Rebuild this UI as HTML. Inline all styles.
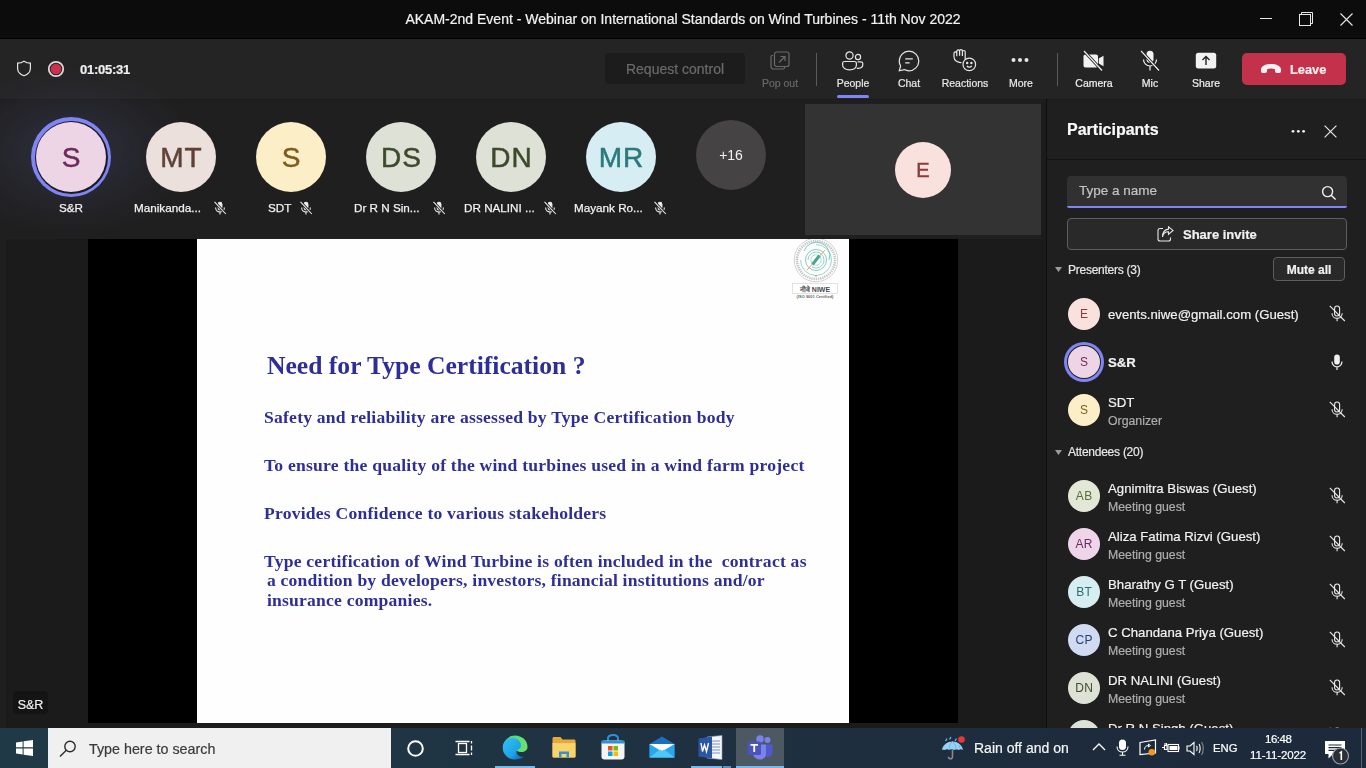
<!DOCTYPE html>
<html><head><meta charset="utf-8">
<style>
*{margin:0;padding:0;box-sizing:border-box}
html,body{width:1366px;height:768px;overflow:hidden;background:#1f1f1f;font-family:"Liberation Sans",sans-serif;color:#fff}
div,span,svg{position:absolute}
.t{white-space:nowrap;line-height:1;will-change:transform;-webkit-text-stroke:0.2px currentColor}
.slide .t{-webkit-text-stroke:0}
#title{left:0;top:0;width:1366px;height:38px;background:#0c0c0c}
#toolbar{left:0;top:38px;width:1366px;height:61px;background:#242424}
#strip{left:0;top:99px;width:1366px;height:4px;background:linear-gradient(#1b1b1b 0,#1b1b1b 1px,#202020 1px,#1d1d1d 3px,#1f1f1f 4px)}
#stage{left:0;top:103px;width:1046px;height:625px;background:#1f1f1f}
#vsep{left:1046px;top:99px;width:1px;height:629px;background:#0e0e0e}
#panel{left:1047px;top:103px;width:319px;height:625px;background:#1f1f1f;overflow:hidden}
#taskbar{left:0;top:728px;width:1366px;height:40px;background:linear-gradient(90deg,#1f3a46 0%,#1f3644 25%,#1f3040 55%,#1d2b3d 80%,#1c2a3c 100%)}
.lbl{font-size:10.5px;color:#d6d6d6;text-align:center;width:80px;top:39.8px}
.sep{width:1px;background:#5a5a5a}
.av{border-radius:50%;text-align:center;-webkit-text-stroke:0.5px currentColor;letter-spacing:1px;text-indent:1px}
</style></head>
<body>
<!-- TITLE BAR -->
<div id="title">
  <div class="t" style="left:0;width:1366px;top:11.7px;text-align:center;font-size:14px;color:#f2f2f2">AKAM-2nd Event - Webinar on International Standards on Wind Turbines - 11th Nov 2022</div>
  <svg style="left:1260px;top:18px" width="12" height="2"><rect width="12" height="1" fill="#e8e8e8"/></svg>
  <svg style="left:1299px;top:12px" width="14" height="14" viewBox="0 0 14 14" fill="none" stroke="#e8e8e8" stroke-width="1"><rect x="0.5" y="2.5" width="11" height="11"/><path d="M2.5 2.5V0.5H13.5V11.5H11.5"/></svg>
  <svg style="left:1340px;top:13px" width="13" height="13" viewBox="0 0 13 13" stroke="#e8e8e8" stroke-width="1.1"><path d="M0.5 0.5L12.5 12.5M12.5 0.5L0.5 12.5"/></svg>
</div>

<!-- TOOLBAR -->
<div id="toolbar">
  <svg style="left:16px;top:22px" width="16" height="17" viewBox="0 0 16 17" fill="none" stroke="#e6e6e6" stroke-width="1.2"><path d="M8 1.2C10 2.6 12.2 3.2 14.4 3.2V8.4C14.4 12 11.6 14.4 8 15.8C4.4 14.4 1.6 12 1.6 8.4V3.2C3.8 3.2 6 2.6 8 1.2Z"/></svg>
  <svg style="left:47px;top:22px" width="18" height="18" viewBox="0 0 18 18"><circle cx="9" cy="9" r="7.2" fill="none" stroke="#e0dcdc" stroke-width="1.8"/><circle cx="9" cy="9" r="5.3" fill="#d0304f"/></svg>
  <div class="t" style="left:80px;top:24.6px;font-size:13px;font-weight:bold;color:#f0f0f0;letter-spacing:-0.25px">01:05:31</div>

  <div style="left:605px;top:15px;width:140px;height:31px;background:#1c1c1c;border-radius:4px"></div>
  <div class="t" style="left:605px;width:140px;top:24.2px;text-align:center;font-size:14px;color:#6b6b6b">Request control</div>

  <svg style="left:770px;top:13px" width="21" height="19" viewBox="0 0 21 19" fill="none" stroke="#6a6a6a" stroke-width="1.2"><path d="M3 4.5H2.2C1.5 4.5 1 5 1 5.7V15.5C1 17 2 18 3.5 18H13.3C14 18 14.5 17.5 14.5 16.8V16"/><rect x="4.5" y="1" width="14.5" height="14.5" rx="2"/><path d="M9 11.5L15 5.5M10.5 5.5H15V10"/></svg>
  <div class="lbl t" style="left:739.5px;color:#696969">Pop out</div>
  <div class="sep" style="left:816px;top:15px;height:33px"></div>

  <svg style="left:842px;top:13px" width="22" height="20" viewBox="0 0 22 20" fill="none" stroke="#e6e6e6" stroke-width="1.2"><circle cx="7.5" cy="4.5" r="3.6"/><circle cx="16" cy="6" r="2.6"/><path d="M2.5 10.5H12.5C13.6 10.5 14.4 11.3 14.4 12.4V14C14.4 17 11.5 18.8 7.5 18.8C3.5 18.8 0.6 17 0.6 14V12.4C0.6 11.3 1.4 10.5 2.5 10.5Z"/><path d="M15.6 10.8H18.9C20 10.8 20.8 11.6 20.8 12.7V13.6C20.8 15.8 18.9 17.3 16.2 17.3C15.7 17.3 15.2 17.2 14.8 17.1"/></svg>
  <div class="lbl t" style="left:812.5px;color:#e8e8e8">People</div>
  <div style="left:837px;top:57px;width:32px;height:3px;background:#7f85f5;border-radius:2px"></div>

  <svg style="left:898px;top:12px" width="22" height="22" viewBox="0 0 22 22" fill="none" stroke="#e6e6e6" stroke-width="1.2"><path d="M11 1.2C16.4 1.2 20.8 5.6 20.8 11S16.4 20.8 11 20.8C9.3 20.8 7.7 20.4 6.3 19.6L1.3 20.8L2.6 16C1.7 14.5 1.2 12.8 1.2 11C1.2 5.6 5.6 1.2 11 1.2Z"/><path d="M7.2 8.8H14.8M7.2 12.8H11.6"/></svg>
  <div class="lbl t" style="left:868.5px;color:#e8e8e8">Chat</div>

  <svg style="left:952px;top:11px" width="25" height="23" viewBox="0 0 25 23" fill="none" stroke="#e6e6e6" stroke-width="1.2"><path d="M9.5 13.5C6 13.8 2 12 2 8V4.3C2 3.5 2.6 2.9 3.4 2.9S4.8 3.5 4.8 4.3V7.2V2.3C4.8 1.5 5.4 0.9 6.2 0.9S7.6 1.5 7.6 2.3V6.8V1.8C7.6 1 8.2 0.6 9 0.6S10.4 1 10.4 1.8V7V2.8C10.4 2 11 1.5 11.8 1.5S13.2 2 13.2 2.8V10.5"/><circle cx="17.3" cy="15.4" r="6.3"/><circle cx="15.2" cy="14" r="0.6" fill="#e6e6e6"/><circle cx="19.4" cy="14" r="0.6" fill="#e6e6e6"/><path d="M14.8 17C16.2 18.6 18.4 18.6 19.8 17"/></svg>
  <div class="lbl t" style="left:924.5px;color:#e8e8e8">Reactions</div>

  <svg style="left:1010px;top:19px" width="20" height="6" viewBox="0 0 20 6" fill="#e6e6e6"><circle cx="3.5" cy="3" r="2"/><circle cx="10" cy="3" r="2"/><circle cx="16.5" cy="3" r="2"/></svg>
  <div class="lbl t" style="left:980.5px;color:#e8e8e8">More</div>
  <div class="sep" style="left:1057px;top:15px;height:33px"></div>

  <svg style="left:1082px;top:12px" width="24" height="22" viewBox="0 0 24 22"><path d="M3.5 4.5H14C15.2 4.5 16 5.3 16 6.5V15.5C16 16.7 15.2 17.5 14 17.5H3.5C2.3 17.5 1.5 16.7 1.5 15.5V6.5C1.5 5.3 2.3 4.5 3.5 4.5Z" fill="#f2f2f2"/><path d="M16.8 8.5L21.5 5.8V16.2L16.8 13.5Z" fill="#f2f2f2"/><path d="M2 1L20 20.5" stroke="#222" stroke-width="3"/><path d="M2 1L20 20.5" stroke="#f2f2f2" stroke-width="1.2"/></svg>
  <div class="lbl t" style="left:1053.5px;color:#f0f0f0">Camera</div>

  <svg style="left:1138px;top:12px" width="24" height="22" viewBox="0 0 24 22" fill="none"><rect x="8.5" y="0.8" width="7" height="12" rx="3.5" fill="#f2f2f2"/><path d="M5.5 9.5C5.5 13.2 8.5 16 12 16S18.5 13.2 18.5 9.5M12 16V20.5" stroke="#f2f2f2" stroke-width="1.2"/><path d="M3 0.8L21 20.5" stroke="#222" stroke-width="3"/><path d="M3 0.8L21 20.5" stroke="#f2f2f2" stroke-width="1.2"/></svg>
  <div class="lbl t" style="left:1109.5px;color:#f0f0f0">Mic</div>

  <svg style="left:1195px;top:14px" width="22" height="18" viewBox="0 0 22 18"><rect x="0.8" y="0.8" width="20.4" height="15.8" rx="2.5" fill="#f2f2f2"/><path d="M11 13V4.5M7.5 8L11 4.5L14.5 8" fill="none" stroke="#222" stroke-width="1.4"/></svg>
  <div class="lbl t" style="left:1165.5px;color:#f0f0f0">Share</div>

  <div style="left:1242px;top:15px;width:104px;height:32px;background:#c4314b;border-radius:5px"></div>
  <svg style="left:1260px;top:25px" width="22" height="11" viewBox="0 0 22 11"><path d="M1 6.5C1 3 5.5 1 11 1S21 3 21 6.5V8.3C21 9.3 20.3 10 19.3 10H16.8C15.8 10 15 9.3 15 8.3V6.2C13.8 5.7 12.4 5.4 11 5.4S8.2 5.7 7 6.2V8.3C7 9.3 6.2 10 5.2 10H2.7C1.7 10 1 9.3 1 8.3Z" fill="#fbf0f2"/></svg>
  <div class="t" style="left:1289.5px;top:25.8px;font-size:12.8px;font-weight:bold;color:#fbf0f2">Leave</div>
</div>

<div id="strip"></div>
<div style="left:0;top:38px;width:1366px;height:1px;background:#020202"></div>
<div id="vsep"></div>

<!-- STAGE -->
<div id="stage">
  <div style="left:6px;top:136px;width:1035px;height:587px;background:#1b1b1b"></div>
  <div style="left:1041px;top:0;width:5px;height:625px;background:#1b1b1b"></div>
  <!-- participant strip glow -->
  <div style="left:-60px;top:-40px;width:262px;height:176px;background:radial-gradient(ellipse 50% 50% at 50% 50%,rgba(110,110,190,0.22),rgba(110,110,190,0.08) 55%,rgba(110,110,190,0) 100%)"></div>
  <!-- S&R speaking avatar -->
  <div style="left:31px;top:14px;width:80px;height:80px;border-radius:50%;background:#7f85f5"></div>
  <div style="left:34.5px;top:17.5px;width:73px;height:73px;border-radius:50%;background:#1a1a22"></div>
  <div class="av t" style="left:36px;top:19px;width:70px;height:70px;background:#edd5e6;color:#6b2b5a;font-size:28px;line-height:72px">S</div>
  <div class="t" style="left:31px;width:80px;top:98.7px;text-align:center;font-size:11.7px;color:#f2f2f2;-webkit-text-stroke:0.25px #f2f2f2">S&amp;R</div>

  <div class="av t" style="left:146px;top:19px;width:70px;height:70px;background:#ebe0db;color:#5e4237;font-size:28px;line-height:72px">MT</div>
  <div class="t" style="left:134px;top:98.7px;font-size:11.7px;color:#f2f2f2;-webkit-text-stroke:0.25px #f2f2f2">Manikanda...</div>
  <svg class="mic" style="left:213px;top:98px" width="14" height="14" viewBox="0 0 14 14" fill="none" stroke="#e6e6e6" stroke-width="1"><rect x="4.6" y="0.8" width="4.8" height="8.6" rx="2.4" fill="#ececec" stroke="none"/><path d="M2.6 6.6C2.6 9.2 4.6 11 7 11S11.4 9.2 11.4 6.6M7 11V13.5" stroke="#ececec" stroke-width="1.1"/><path d="M1.5 0.8L12.8 13" stroke="#1f1f1f" stroke-width="2.6"/><path d="M1.5 0.8L12.8 13" stroke="#ececec" stroke-width="1.1"/></svg>

  <div class="av t" style="left:256px;top:19px;width:70px;height:70px;background:#fcefc7;color:#7a5d1c;font-size:28px;line-height:72px">S</div>
  <div class="t" style="left:268px;top:98.7px;font-size:11.7px;color:#f2f2f2;-webkit-text-stroke:0.25px #f2f2f2">SDT</div>
  <svg style="left:299px;top:98px" width="14" height="14" viewBox="0 0 14 14" fill="none" stroke="#e6e6e6" stroke-width="1"><rect x="4.6" y="0.8" width="4.8" height="8.6" rx="2.4" fill="#ececec" stroke="none"/><path d="M2.6 6.6C2.6 9.2 4.6 11 7 11S11.4 9.2 11.4 6.6M7 11V13.5" stroke="#ececec" stroke-width="1.1"/><path d="M1.5 0.8L12.8 13" stroke="#1f1f1f" stroke-width="2.6"/><path d="M1.5 0.8L12.8 13" stroke="#ececec" stroke-width="1.1"/></svg>

  <div class="av t" style="left:366px;top:19px;width:70px;height:70px;background:#dde1d6;color:#3d4a2c;font-size:28px;line-height:72px">DS</div>
  <div class="t" style="left:354px;top:98.7px;font-size:11.7px;color:#f2f2f2;-webkit-text-stroke:0.25px #f2f2f2">Dr R N Sin...</div>
  <svg style="left:432px;top:98px" width="14" height="14" viewBox="0 0 14 14" fill="none" stroke="#e6e6e6" stroke-width="1"><rect x="4.6" y="0.8" width="4.8" height="8.6" rx="2.4" fill="#ececec" stroke="none"/><path d="M2.6 6.6C2.6 9.2 4.6 11 7 11S11.4 9.2 11.4 6.6M7 11V13.5" stroke="#ececec" stroke-width="1.1"/><path d="M1.5 0.8L12.8 13" stroke="#1f1f1f" stroke-width="2.6"/><path d="M1.5 0.8L12.8 13" stroke="#ececec" stroke-width="1.1"/></svg>

  <div class="av t" style="left:476px;top:19px;width:70px;height:70px;background:#dde1d6;color:#3d4a2c;font-size:28px;line-height:72px">DN</div>
  <div class="t" style="left:464px;top:98.7px;font-size:11.7px;color:#f2f2f2;-webkit-text-stroke:0.25px #f2f2f2">DR NALINI ...</div>
  <svg style="left:543px;top:98px" width="14" height="14" viewBox="0 0 14 14" fill="none" stroke="#e6e6e6" stroke-width="1"><rect x="4.6" y="0.8" width="4.8" height="8.6" rx="2.4" fill="#ececec" stroke="none"/><path d="M2.6 6.6C2.6 9.2 4.6 11 7 11S11.4 9.2 11.4 6.6M7 11V13.5" stroke="#ececec" stroke-width="1.1"/><path d="M1.5 0.8L12.8 13" stroke="#1f1f1f" stroke-width="2.6"/><path d="M1.5 0.8L12.8 13" stroke="#ececec" stroke-width="1.1"/></svg>

  <div class="av t" style="left:586px;top:19px;width:70px;height:70px;background:#d6eef3;color:#2a7a7c;font-size:28px;line-height:72px">MR</div>
  <div class="t" style="left:574px;top:98.7px;font-size:11.7px;color:#f2f2f2;-webkit-text-stroke:0.25px #f2f2f2">Mayank Ro...</div>
  <svg style="left:653px;top:98px" width="14" height="14" viewBox="0 0 14 14" fill="none" stroke="#e6e6e6" stroke-width="1"><rect x="4.6" y="0.8" width="4.8" height="8.6" rx="2.4" fill="#ececec" stroke="none"/><path d="M2.6 6.6C2.6 9.2 4.6 11 7 11S11.4 9.2 11.4 6.6M7 11V13.5" stroke="#ececec" stroke-width="1.1"/><path d="M1.5 0.8L12.8 13" stroke="#1f1f1f" stroke-width="2.6"/><path d="M1.5 0.8L12.8 13" stroke="#ececec" stroke-width="1.1"/></svg>

  <div class="av t" style="left:696px;top:17px;width:70px;height:70px;background:#454343;color:#f2f2f2;font-size:14px;line-height:70px;-webkit-text-stroke:0;letter-spacing:0;text-indent:0">+16</div>

  <!-- gray video tile -->
  <div style="left:805px;top:1px;width:236px;height:131px;background:#333333"></div>
  <div class="av t" style="left:895px;top:39px;width:56px;height:56px;background:#f9e1dd;color:#8c3c3a;font-size:20px;line-height:56px">E</div>

  <!-- slide -->
  <div style="left:88px;top:136px;width:870px;height:484px;background:#000"></div>
  <div class="slide" style="left:197px;top:136px;width:652px;height:484px;background:#fefefe;overflow:hidden;font-family:'Liberation Serif',serif;font-weight:bold;color:#2e2e98">
    <svg style="left:595px;top:0px" width="48" height="62" viewBox="0 0 48 62">
      <circle cx="24" cy="21" r="21.8" fill="none" stroke="#b5b5b5" stroke-width="0.6"/>
      <circle cx="24" cy="21" r="19" fill="none" stroke="#8e8e8e" stroke-width="2.6" stroke-dasharray="1.3 0.9" opacity="0.5"/>
      <path d="M24 5.5A15.5 15.5 0 1 1 8.5 21" fill="none" stroke="#8fd0c6" stroke-width="0.9"/>
      <path d="M12 12A13 13 0 0 1 37 21" fill="none" stroke="#6cc3b6" stroke-width="0.9"/>
      <circle cx="24" cy="21" r="10.5" fill="none" stroke="#77c6ba" stroke-width="0.9"/>
      <path d="M16 21A8 8 0 0 1 32 21A8 8 0 0 1 20 28" fill="none" stroke="#86ccc1" stroke-width="0.9"/>
      <circle cx="24" cy="21" r="5.2" fill="none" stroke="#9ad5cb" stroke-width="0.8"/>
      <path d="M15 31L33 11" stroke="#e8a160" stroke-width="1"/>
      <path d="M20.5 25.5L27.5 16.5" stroke="#4aa58f" stroke-width="3"/>
      <path d="M24 36V38" stroke="#e07050" stroke-width="0.8"/>
      <rect x="0.5" y="44.3" width="45" height="10.2" fill="#fff" stroke="#cfcfcf" stroke-width="0.6"/>
      <text x="23" y="52.6" font-size="7" font-family="Liberation Sans" font-weight="bold" fill="#4a4a4a" text-anchor="middle">नीवे NIWE</text>
      <text x="23" y="59.2" font-size="4" font-family="Liberation Sans" font-weight="bold" fill="#666" text-anchor="middle">(ISO 9001 Certified)</text>
    </svg>
    <div class="t" style="left:70px;top:113.5px;font-size:25.6px">Need for Type Certification ?</div>
    <div class="t" style="left:67.3px;top:170.0px;font-size:17.6px;letter-spacing:0.22px">Safety and reliability are assessed by Type Certification body</div>
    <div class="t" style="left:67.3px;top:217.9px;font-size:17.6px;letter-spacing:0.22px">To ensure the quality of the wind turbines used in a wind farm project</div>
    <div class="t" style="left:67.3px;top:266.0px;font-size:17.6px;letter-spacing:0.22px">Provides Confidence to various stakeholders</div>
    <div class="t" style="left:67.1px;top:313.9px;font-size:17.6px;letter-spacing:0.22px;white-space:pre">Type certification of Wind Turbine is often included in the  contract as</div>
    <div class="t" style="left:69.7px;top:333.0px;font-size:17.6px;letter-spacing:0.2px">a condition by developers, investors, financial institutions and/or</div>
    <div class="t" style="left:69.7px;top:353.0px;font-size:17.6px;letter-spacing:0.2px">insurance companies.</div>
  </div>

  <!-- name tag -->
  <div style="left:13px;top:588px;width:35px;height:23px;background:#141414;border-radius:4px"></div>
  <div class="t" style="left:13px;width:35px;text-align:center;top:596px;font-size:12.5px;color:#f0f0f0">S&amp;R</div>
</div>

<!-- PANEL -->
<div id="panel">
  <div class="t" style="left:20.4px;top:19px;font-size:16px;font-weight:bold;color:#fafafa">Participants</div>
  <svg style="left:244px;top:26px" width="15" height="5" viewBox="0 0 15 5" fill="#f0f0f0"><circle cx="2" cy="2.3" r="1.4"/><circle cx="7.3" cy="2.3" r="1.4"/><circle cx="12.6" cy="2.3" r="1.4"/></svg>
  <svg style="left:277px;top:22px" width="13" height="13" viewBox="0 0 13 13" stroke="#e8e8e8" stroke-width="1.2"><path d="M0.6 0.6L12.4 12.4M12.4 0.6L0.6 12.4"/></svg>
  <div style="left:0;top:56px;width:319px;height:1px;background:#131313"></div>

  <div style="left:20px;top:73px;width:280px;height:32px;background:#313131;border-radius:4px 4px 2px 2px;overflow:hidden"><div style="left:0;top:30px;width:280px;height:2px;background:#7f85f5"></div></div>
  <div class="t" style="left:32.2px;top:81.2px;font-size:13.5px;color:#c4c4c4">Type a name</div>
  <svg style="left:274px;top:82px" width="16" height="16" viewBox="0 0 16 16" fill="none" stroke="#f0f0f0" stroke-width="1.4"><circle cx="6.6" cy="6.6" r="5"/><path d="M10.2 10.2L14.6 14.6"/></svg>

  <div style="left:20px;top:115px;width:280px;height:32px;background:#292929;border:1px solid #5e5e5e;border-radius:4px"></div>
  <svg style="left:110px;top:123px" width="17" height="16" viewBox="0 0 17 16" fill="none" stroke="#e8e8e8" stroke-width="1.1"><path d="M6 2.5H3C1.9 2.5 1 3.4 1 4.5V13C1 14.1 1.9 15 3 15H11.5C12.6 15 13.5 14.1 13.5 13V11.5"/><path d="M5.5 11C6 7.8 8.5 5.8 11.5 5.8V8.3L16 4.4L11.5 0.8V3.1C7.8 3.6 5.5 6.8 5.5 11Z"/></svg>
  <div class="t" style="left:136px;top:124.9px;font-size:13px;font-weight:bold;color:#f2f2f2">Share invite</div>

  <svg style="left:8px;top:164px" width="7" height="5" viewBox="0 0 7 5"><path d="M0 0H7L3.5 5Z" fill="#9a9a9a"/></svg>
  <div class="t" style="left:21px;top:161.2px;font-size:12px;letter-spacing:-0.25px;color:#e8e8e8">Presenters (3)</div>
  <div style="left:226px;top:154px;width:72px;height:24px;background:#292929;border:1px solid #5e5e5e;border-radius:4px"></div>
  <div class="t" style="left:226px;width:72px;text-align:center;top:160.8px;font-size:12px;font-weight:bold;color:#f2f2f2">Mute all</div>

  <svg style="left:8px;top:347px" width="7" height="5" viewBox="0 0 7 5"><path d="M0 0H7L3.5 5Z" fill="#9a9a9a"/></svg>
  <div class="t" style="left:21px;top:343.2px;font-size:12px;letter-spacing:-0.25px;color:#e8e8e8">Attendees (20)</div>
<div class="av t" style="left:21px;top:195px;width:32px;height:32px;background:#f9e1dd;color:#8c3c3a;font-size:12px;line-height:32px;-webkit-text-stroke:0;letter-spacing:0.3px;text-indent:0.3px">E</div>
<div class="t" style="left:61px;top:205.1px;font-size:13.2px;color:#f2f2f2">events.niwe@gmail.com (Guest)</div>
<svg style="left:282px;top:202.0px" width="17" height="17" viewBox="0 0 17 17" fill="none" stroke="#ececec" stroke-width="1.1"><rect x="5.6" y="1" width="5" height="10" rx="2.5"/><path d="M3 8.2C3 11.1 5.2 13.3 8.1 13.3S13.2 11.1 13.2 8.2M8.1 13.3V16.3"/><path d="M0.8 0.8L15.8 16"/></svg>
<div style="left:17px;top:239px;width:40px;height:40px;border-radius:50%;background:#7f85f5"></div>
<div style="left:20px;top:242px;width:34px;height:34px;border-radius:50%;background:#1f1f1f"></div>
<div class="av t" style="left:21px;top:243px;width:32px;height:32px;background:#edd5e6;color:#6b2b5a;font-size:12px;line-height:32px;-webkit-text-stroke:0;letter-spacing:0.3px;text-indent:0.3px">S</div>
<div class="t" style="left:61px;top:252.6px;font-size:13.2px;font-weight:bold;color:#f2f2f2">S&amp;R</div>
<svg style="left:284px;top:250.5px" width="12" height="17" viewBox="0 0 12 17" fill="none"><rect x="3.2" y="0.6" width="5.6" height="10" rx="2.8" fill="#f0f0f0"/><path d="M1 7.6C1 10.6 3.3 12.8 6 12.8S11 10.6 11 7.6M6 12.8V16" stroke="#f0f0f0" stroke-width="1.2"/></svg>
<div class="av t" style="left:21px;top:291px;width:32px;height:32px;background:#fcefc7;color:#7a5d1c;font-size:12px;line-height:32px;-webkit-text-stroke:0;letter-spacing:0.3px;text-indent:0.3px">S</div>
<div class="t" style="left:61px;top:292.6px;font-size:13.2px;color:#f2f2f2">SDT</div>
<div class="t" style="left:61px;top:311.5px;font-size:12.3px;color:#adadad">Organizer</div>
<svg style="left:282px;top:298.0px" width="17" height="17" viewBox="0 0 17 17" fill="none" stroke="#ececec" stroke-width="1.1"><rect x="5.6" y="1" width="5" height="10" rx="2.5"/><path d="M3 8.2C3 11.1 5.2 13.3 8.1 13.3S13.2 11.1 13.2 8.2M8.1 13.3V16.3"/><path d="M0.8 0.8L15.8 16"/></svg>
<div class="av t" style="left:21px;top:377px;width:32px;height:32px;background:#e3e8d6;color:#55703b;font-size:12px;line-height:32px;-webkit-text-stroke:0;letter-spacing:0.3px;text-indent:0.3px">AB</div>
<div class="t" style="left:61px;top:379.3px;font-size:13.2px;color:#f2f2f2">Agnimitra Biswas (Guest)</div>
<div class="t" style="left:61px;top:398.4px;font-size:12.3px;color:#adadad">Meeting guest</div>
<svg style="left:282px;top:384.0px" width="17" height="17" viewBox="0 0 17 17" fill="none" stroke="#ececec" stroke-width="1.1"><rect x="5.6" y="1" width="5" height="10" rx="2.5"/><path d="M3 8.2C3 11.1 5.2 13.3 8.1 13.3S13.2 11.1 13.2 8.2M8.1 13.3V16.3"/><path d="M0.8 0.8L15.8 16"/></svg>
<div class="av t" style="left:21px;top:425px;width:32px;height:32px;background:#eed5ea;color:#6b2b5e;font-size:12px;line-height:32px;-webkit-text-stroke:0;letter-spacing:0.3px;text-indent:0.3px">AR</div>
<div class="t" style="left:61px;top:427.3px;font-size:13.2px;color:#f2f2f2">Aliza Fatima Rizvi (Guest)</div>
<div class="t" style="left:61px;top:446.4px;font-size:12.3px;color:#adadad">Meeting guest</div>
<svg style="left:282px;top:432.0px" width="17" height="17" viewBox="0 0 17 17" fill="none" stroke="#ececec" stroke-width="1.1"><rect x="5.6" y="1" width="5" height="10" rx="2.5"/><path d="M3 8.2C3 11.1 5.2 13.3 8.1 13.3S13.2 11.1 13.2 8.2M8.1 13.3V16.3"/><path d="M0.8 0.8L15.8 16"/></svg>
<div class="av t" style="left:21px;top:473px;width:32px;height:32px;background:#d6eef1;color:#2a6e72;font-size:12px;line-height:32px;-webkit-text-stroke:0;letter-spacing:0.3px;text-indent:0.3px">BT</div>
<div class="t" style="left:61px;top:475.3px;font-size:13.2px;color:#f2f2f2">Bharathy G T (Guest)</div>
<div class="t" style="left:61px;top:494.4px;font-size:12.3px;color:#adadad">Meeting guest</div>
<svg style="left:282px;top:480.0px" width="17" height="17" viewBox="0 0 17 17" fill="none" stroke="#ececec" stroke-width="1.1"><rect x="5.6" y="1" width="5" height="10" rx="2.5"/><path d="M3 8.2C3 11.1 5.2 13.3 8.1 13.3S13.2 11.1 13.2 8.2M8.1 13.3V16.3"/><path d="M0.8 0.8L15.8 16"/></svg>
<div class="av t" style="left:21px;top:521px;width:32px;height:32px;background:#d0daf0;color:#26407e;font-size:12px;line-height:32px;-webkit-text-stroke:0;letter-spacing:0.3px;text-indent:0.3px">CP</div>
<div class="t" style="left:61px;top:523.3px;font-size:13.2px;color:#f2f2f2">C Chandana Priya (Guest)</div>
<div class="t" style="left:61px;top:542.4px;font-size:12.3px;color:#adadad">Meeting guest</div>
<svg style="left:282px;top:528.0px" width="17" height="17" viewBox="0 0 17 17" fill="none" stroke="#ececec" stroke-width="1.1"><rect x="5.6" y="1" width="5" height="10" rx="2.5"/><path d="M3 8.2C3 11.1 5.2 13.3 8.1 13.3S13.2 11.1 13.2 8.2M8.1 13.3V16.3"/><path d="M0.8 0.8L15.8 16"/></svg>
<div class="av t" style="left:21px;top:569px;width:32px;height:32px;background:#dde1d6;color:#3d4a2c;font-size:12px;line-height:32px;-webkit-text-stroke:0;letter-spacing:0.3px;text-indent:0.3px">DN</div>
<div class="t" style="left:61px;top:571.3px;font-size:13.2px;color:#f2f2f2">DR NALINI (Guest)</div>
<div class="t" style="left:61px;top:590.4px;font-size:12.3px;color:#adadad">Meeting guest</div>
<svg style="left:282px;top:576.0px" width="17" height="17" viewBox="0 0 17 17" fill="none" stroke="#ececec" stroke-width="1.1"><rect x="5.6" y="1" width="5" height="10" rx="2.5"/><path d="M3 8.2C3 11.1 5.2 13.3 8.1 13.3S13.2 11.1 13.2 8.2M8.1 13.3V16.3"/><path d="M0.8 0.8L15.8 16"/></svg>
<div class="av t" style="left:21px;top:617px;width:32px;height:32px;background:#dde1d6;color:#3d4a2c;font-size:12px;line-height:32px;-webkit-text-stroke:0;letter-spacing:0.3px;text-indent:0.3px">DS</div>
<div class="t" style="left:61px;top:619.3px;font-size:13.2px;color:#f2f2f2">Dr R N Singh (Guest)</div>
<div class="t" style="left:61px;top:638.4px;font-size:12.3px;color:#adadad">Meeting guest</div>
<svg style="left:282px;top:624.0px" width="17" height="17" viewBox="0 0 17 17" fill="none" stroke="#ececec" stroke-width="1.1"><rect x="5.6" y="1" width="5" height="10" rx="2.5"/><path d="M3 8.2C3 11.1 5.2 13.3 8.1 13.3S13.2 11.1 13.2 8.2M8.1 13.3V16.3"/><path d="M0.8 0.8L15.8 16"/></svg>
</div>

<!-- TASKBAR -->
<div id="taskbar">
  <svg style="left:16px;top:12px" width="17" height="16" viewBox="0 0 17 16" fill="#ffffff"><path d="M0 2.4L6.6 1.5V7.3H0Z"/><path d="M7.6 1.35L17 0V7.3H7.6Z"/><path d="M0 8.5H6.6V14.5L0 13.6Z"/><path d="M7.6 8.5H17V16L7.6 14.65Z"/></svg>
  <div style="left:48px;top:0;width:343px;height:40px;background:#f0f0f0"></div>
  <svg style="left:59px;top:12px" width="18" height="17" viewBox="0 0 18 17" fill="none" stroke="#2b2b2b" stroke-width="1.4"><circle cx="11" cy="6.5" r="5.2"/><path d="M7.3 10.2L1 16.4"/></svg>
  <div class="t" style="left:88.7px;top:14px;font-size:14.3px;color:#3a3a3a">Type here to search</div>
  <svg style="left:406px;top:11px" width="19" height="19" viewBox="0 0 19 19" fill="none" stroke="#fff" stroke-width="2"><circle cx="9.5" cy="9.5" r="7.3"/></svg>
  <svg style="left:455px;top:12px" width="18" height="16" viewBox="0 0 18 16" fill="none" stroke="#fff" stroke-width="1.3"><rect x="3.5" y="3.5" width="8" height="9"/><path d="M0.5 1.5H14.5M0.5 14.5H14.5M16.5 1V3.5M16.5 5.5V10.5M16.5 12.5V15"/></svg>
  <!-- edge -->
  <svg style="left:502px;top:7px" width="26" height="25" viewBox="0 0 26 25">
    <defs><linearGradient id="eg1" x1="0" y1="0" x2="1" y2="1"><stop offset="0" stop-color="#35c1f1"/><stop offset="0.6" stop-color="#1fa3e8"/><stop offset="1" stop-color="#0c59a4"/></linearGradient>
    <linearGradient id="eg2" x1="0" y1="0" x2="1" y2="0"><stop offset="0" stop-color="#42d58d"/><stop offset="1" stop-color="#6ee36b"/></linearGradient></defs>
    <path d="M13 0.5C20 0.5 25.5 5.5 25.5 12C25.5 15.5 22.5 17 19.5 17C16 17 13.5 15.5 13.5 13.5C13.5 12.5 15 12.2 15 10.5C15 8 12.2 6 9 6C4.5 6 1 9.5 0.8 13.5C0.7 6.5 6.2 0.5 13 0.5Z" fill="url(#eg2)"/>
    <path d="M0.8 13C0.8 6.5 5.5 3 10.5 3C16 3 19 7 19 10.5C19 11.5 18.8 12.2 18.3 12.8C17.5 13.8 16 14.3 15 15.5C14 16.7 14.5 19 16.5 20.5C18 21.5 20 22 22 21.8C19.8 23.6 16.5 24.5 13 24.5C6.5 24.5 0.8 19.5 0.8 13Z" fill="url(#eg1)"/>
  </svg>
  <div style="left:495px;top:38px;width:40px;height:2px;background:#76b9ed"></div>
  <!-- explorer -->
  <svg style="left:552px;top:8px" width="24" height="22" viewBox="0 0 24 22"><path d="M0.5 2.5C0.5 1.5 1.2 1 2 1H8.5L10.5 3.5H22C23 3.5 23.5 4 23.5 5V20C23.5 21 23 21.5 22 21.5H2C1 21.5 0.5 21 0.5 20Z" fill="#e8a93a"/><path d="M0.5 7H23.5V20C23.5 21 23 21.5 22 21.5H2C1 21.5 0.5 21 0.5 20Z" fill="#f8d46a"/><path d="M7 21.5V15.5H17V21.5H14.5V18H9.5V21.5Z" fill="#3b8fd3"/></svg>
  <!-- store -->
  <svg style="left:601px;top:6px" width="24" height="26" viewBox="0 0 24 26"><path d="M7 7V4.5C7 2.5 9 1 12 1S17 2.5 17 4.5V7" fill="none" stroke="#2f8fd8" stroke-width="2"/><rect x="0.5" y="6.5" width="23" height="19" rx="3" fill="#f5f5f5"/><rect x="0.5" y="6.5" width="23" height="3" fill="#2f8fd8"/><rect x="7" y="12" width="4.5" height="4.5" fill="#f25022"/><rect x="12.5" y="12" width="4.5" height="4.5" fill="#7fba00"/><rect x="7" y="17.5" width="4.5" height="4.5" fill="#00a4ef"/><rect x="12.5" y="17.5" width="4.5" height="4.5" fill="#ffb900"/></svg>
  <!-- mail -->
  <svg style="left:649px;top:8px" width="26" height="22" viewBox="0 0 26 22"><path d="M0.5 8L13 0.5L25.5 8V21.5H0.5Z" fill="#1d6fc0"/><path d="M0.5 8H25.5V21.5H0.5Z" fill="#28a8ea"/><path d="M0.5 8L13 15.5L25.5 8" fill="#ffffff"/><path d="M0.5 21.5L11 13.5L13 14.8L15 13.5L25.5 21.5Z" fill="#50c8f5"/></svg>
  <!-- word -->
  <svg style="left:698px;top:7px" width="25" height="25" viewBox="0 0 25 25"><path d="M9 2L24 0.5V24.5L9 23Z" fill="#f4f6fb" stroke="#8aa0c8" stroke-width="0.6"/><path d="M11 6H22M11 9H22M11 12H22M11 15H22M11 18H22" stroke="#6d89c2" stroke-width="0.9"/><path d="M0.5 3.5L14 1.5V23.5L0.5 21.5Z" fill="#2a56a8"/><path d="M3 8L4.5 16.5L6.5 10L8.5 16.5L10.5 8" fill="none" stroke="#fff" stroke-width="1.4"/></svg>
  <div style="left:691px;top:38px;width:31px;height:2px;background:#76b9ed"></div>
  <div style="left:723px;top:38px;width:8px;height:2px;background:#5e8fb8"></div>
  <!-- teams -->
  <div style="left:736px;top:0;width:48px;height:40px;background:#4c5862"></div>
  <svg style="left:747px;top:7px" width="26" height="25" viewBox="0 0 26 25"><circle cx="20.5" cy="5" r="3" fill="#7b83eb"/><path d="M16 9.5H24.5C25 9.5 25.5 10 25.5 10.5V17C25.5 20 23.3 22 20.5 22C19 22 17.5 21.4 16.5 20.3Z" fill="#5059c9"/><circle cx="13" cy="4" r="3.8" fill="#7b83eb"/><path d="M6 9.5H19V19C19 22 16.5 24.5 13 24.5C9.5 24.5 6 22 6 18.5Z" fill="#7b83eb"/><rect x="0.5" y="6.5" width="13.5" height="13.5" rx="1.5" fill="#4b53bc"/><path d="M3.5 9.8H11M7.25 9.8V17" stroke="#fff" stroke-width="1.8"/></svg>
  <div style="left:736px;top:38px;width:48px;height:2px;background:#76b9ed"></div>

  <!-- weather -->
  <svg style="left:941px;top:7px" width="26" height="26" viewBox="0 0 26 26"><path d="M1 15C2 9.5 6.5 6.5 11.5 6.5S21 9.5 22 15C20.7 14 19 14 17.7 15C16.4 14 14.4 14 13 15C11.6 14 9.6 14 8.3 15C7 14 5 14 3.7 15C2.8 14.5 1.8 14.5 1 15Z" fill="#9ad0f5"/><path d="M11.5 6.5C9 8.5 8 11.5 8.3 15M11.5 6.5C14 8.5 15 11.5 15 15" stroke="#6cb4e6" stroke-width="1" fill="none"/><path d="M11.5 15V21.5C11.5 23 10.5 23.8 9.5 23.8S7.5 23 7.5 21.8" stroke="#8a8a8a" stroke-width="1.6" fill="none"/><circle cx="20.5" cy="4.5" r="3.3" fill="#e53935"/><path d="M6 3.5L4.5 6M10 2L8.5 4.5M15.5 3.5L14 6M19.5 10L18 12.5" stroke="#6cb4e6" stroke-width="1.3"/></svg>
  <div class="t" style="left:973.5px;top:12.9px;font-size:14px;color:#f5f5f5">Rain off and on</div>

  <svg style="left:1092px;top:15px" width="14" height="8" viewBox="0 0 14 8" fill="none" stroke="#fff" stroke-width="1.3"><path d="M1 7L7 1L13 7"/></svg>
  <svg style="left:1116px;top:11px" width="13" height="17" viewBox="0 0 13 17"><rect x="3" y="0.5" width="7" height="10.5" rx="3.5" fill="#fff"/><path d="M1 7.5C1 10.8 3.5 13 6.5 13S12 10.8 12 7.5M6.5 13V16M3.5 16.3H9.5" stroke="#fff" stroke-width="1.1" fill="none"/></svg>
  <svg style="left:1137px;top:11px" width="21" height="18" viewBox="0 0 21 18"><path d="M3 3.5L18.5 1V14L3 15.5Z" fill="none" stroke="#fff" stroke-width="1.2"/><path d="M7.5 10.5C7.5 8 9 6.5 11.5 6.5M13.5 6.5L11.5 5L11.5 8Z" stroke="#fff" stroke-width="1" fill="none"/><circle cx="14.8" cy="13.3" r="3.3" fill="#f6981f"/></svg>
  <svg style="left:1162px;top:14px" width="18" height="11" viewBox="0 0 18 11" fill="none" stroke="#fff" stroke-width="1.1"><rect x="6" y="2.5" width="10.5" height="7"/><rect x="7.5" y="4" width="8" height="4" fill="#fff" stroke="none"/><path d="M17 4.5V7.5M0 5.5H2.5M2.5 3.5H5V7.5H2.5ZM3 1V3.5M4.5 1V3.5"/></svg>
  <svg style="left:1186px;top:13px" width="18" height="15" viewBox="0 0 18 15" fill="none" stroke="#fff" stroke-width="1.1"><path d="M1 5H4L8 1.5V13.5L4 10H1Z"/><path d="M10.5 5C11.3 5.8 11.3 9.2 10.5 10M13 3C14.5 4.8 14.5 10.2 13 12" /><path d="M15.5 1C17.8 3.8 17.8 11.2 15.5 14" stroke="#888"/></svg>
  <div class="t" style="left:1213px;top:14.5px;font-size:11.3px;color:#fff">ENG</div>
  <div class="t" style="left:1264.5px;top:5.6px;font-size:11.5px;letter-spacing:-0.5px;color:#fff">16:48</div>
  <div class="t" style="left:1250px;top:22.4px;font-size:11.5px;letter-spacing:-0.1px;color:#fff">11-11-2022</div>
  <svg style="left:1324px;top:12px" width="27" height="25" viewBox="0 0 27 25"><path d="M1 1H21V14H9L4.5 18.5V14H1Z" fill="#fff"/><path d="M4.5 5H17.5M4.5 7.7H17.5M4.5 10.4H13" stroke="#1b2a3b" stroke-width="1.2"/><circle cx="16.5" cy="16" r="8" fill="#2a2f36" stroke="#9aa0a6" stroke-width="1.2"/><path d="M15.5 13.2L17.3 12V20" stroke="#fff" stroke-width="1.6" fill="none"/></svg>
  <div style="left:1361px;top:0;width:1px;height:40px;background:#5a6572"></div>
</div>
</body></html>
